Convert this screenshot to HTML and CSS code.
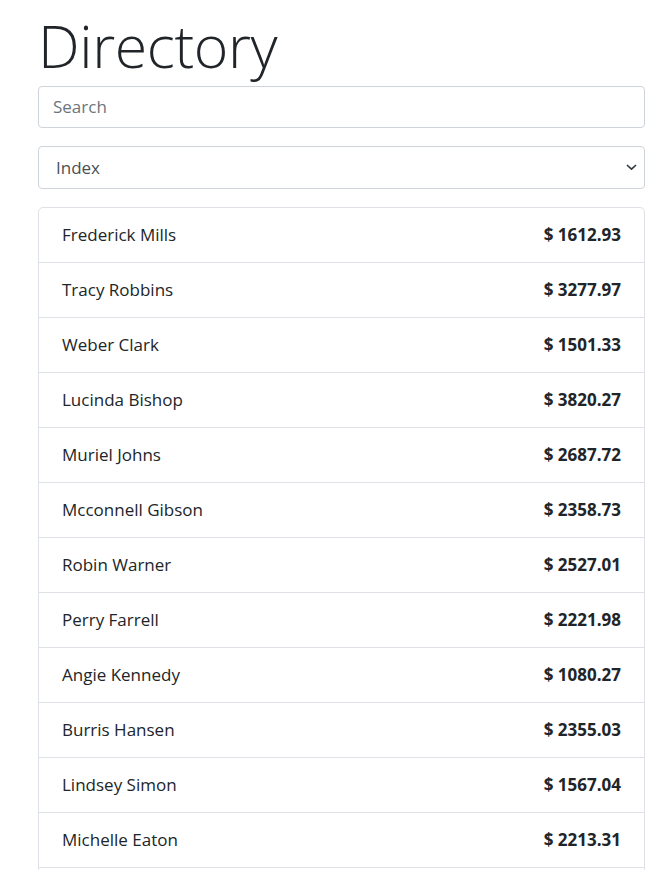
FILE: index.html
```html
<!DOCTYPE html>
<html lang="en">
<head>
<meta charset="utf-8">
<title>Directory</title>
<link rel="stylesheet" href="styles.css">
</head>
<body>
<main class="container">
  <h1 class="title">Directory</h1>
  <input class="field search" type="text" placeholder="Search">
  <div class="select-wrap">
    <select class="field select">
      <option>Index</option>
    </select>
    <svg class="chevron" width="11" height="7" viewBox="0 0 11 7"><path d="M1.5 1.5 5.5 5.2l4-3.7" fill="none" stroke="#343a40" stroke-width="1.7" stroke-linecap="round" stroke-linejoin="round"/></svg>
  </div>
  <ul class="list">
    <li class="item"><span class="name">Frederick Mills</span><span class="amount">$ 1612.93</span></li>
    <li class="item"><span class="name">Tracy Robbins</span><span class="amount">$ 3277.97</span></li>
    <li class="item"><span class="name">Weber Clark</span><span class="amount">$ 1501.33</span></li>
    <li class="item"><span class="name">Lucinda Bishop</span><span class="amount">$ 3820.27</span></li>
    <li class="item"><span class="name">Muriel Johns</span><span class="amount">$ 2687.72</span></li>
    <li class="item"><span class="name">Mcconnell Gibson</span><span class="amount">$ 2358.73</span></li>
    <li class="item"><span class="name">Robin Warner</span><span class="amount">$ 2527.01</span></li>
    <li class="item"><span class="name">Perry Farrell</span><span class="amount">$ 2221.98</span></li>
    <li class="item"><span class="name">Angie Kennedy</span><span class="amount">$ 1080.27</span></li>
    <li class="item"><span class="name">Burris Hansen</span><span class="amount">$ 2355.03</span></li>
    <li class="item"><span class="name">Lindsey Simon</span><span class="amount">$ 1567.04</span></li>
    <li class="item"><span class="name">Michelle Eaton</span><span class="amount">$ 2213.31</span></li>
    <li class="item item-empty"></li>
  </ul>
</main>
</body>
</html>
```
FILE: styles.css
```css
html, body {
  margin: 0;
  padding: 0;
  background: #fff;
}
body {
  font-family: "Open Sans", "Noto Sans", "Liberation Sans", sans-serif;
  color: #212529;
  overflow: hidden;
}
.container {
  padding: 0 20px 0 38px;
  display: flex;
  flex-direction: column;
}
.title {
  font-size: 59px;
  font-weight: 300;
  line-height: 1.2;
  margin: 10px 0 5px 0;
  letter-spacing: -0.4px;
}
.field {
  box-sizing: border-box;
  width: 100%;
  font-family: inherit;
  font-size: 17px;
  color: #495057;
  background: #fff;
  border: 1px solid #ced4da;
  border-radius: 4px;
  outline: none;
}
.search {
  height: 42px;
  padding: 0 14px;
  margin-bottom: 18px;
}
.search::placeholder {
  color: #6c757d;
}
.select-wrap {
  position: relative;
  margin-bottom: 18px;
}
.select {
  height: 43px;
  padding: 0 17px;
  appearance: none;
  -webkit-appearance: none;
}
.chevron {
  position: absolute;
  right: 8px;
  top: 18px;
  width: 11px;
  height: 7px;
}
.list {
  list-style: none;
  margin: 0;
  padding: 0;
  border: 1px solid #dee2e6;
  border-radius: 5px;
}
.item {
  display: flex;
  justify-content: space-between;
  align-items: center;
  height: 54px;
  padding: 0 23px;
  border-bottom: 1px solid #dee2e6;
  font-size: 17px;
}
.name {
  color: #212529;
}
.amount {
  font-weight: 700;
  color: #212529;
}
```
